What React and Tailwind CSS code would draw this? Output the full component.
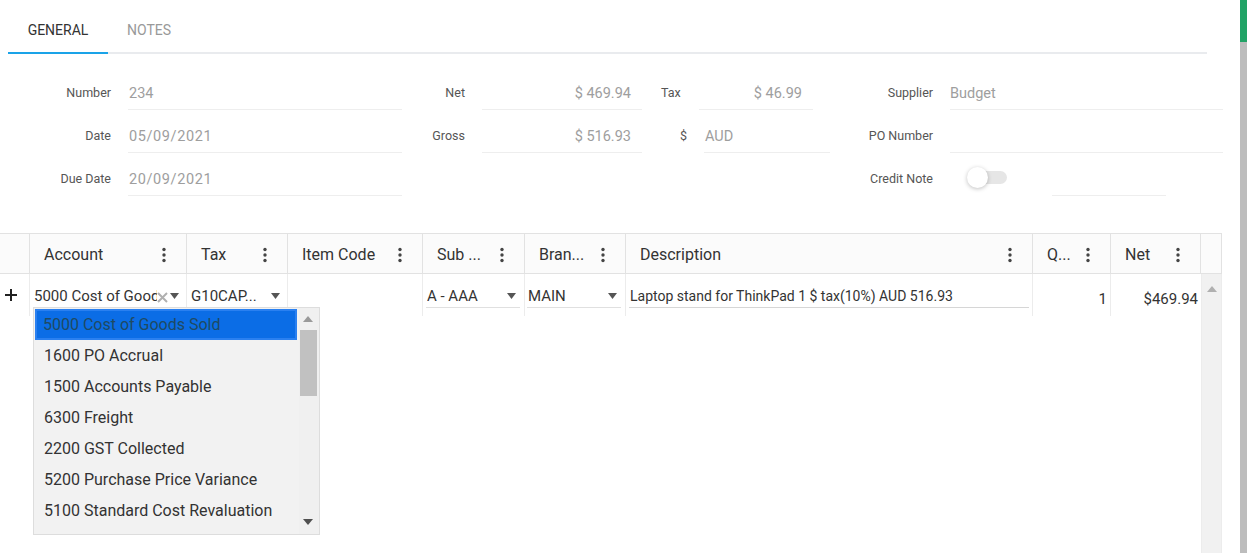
import React from 'react';

const labelCls = 'flex h-full items-end justify-end pb-[7px] text-[12.5px] text-[#555]';
const fieldCls = 'flex h-full items-end pb-[4px] border-b border-[#eeeeee] text-[14.5px] text-[#9e9e9e]';

const Kebab = () => (
  <svg width="4" height="16" viewBox="0 0 4 16" className="shrink-0">
    <circle cx="2" cy="2.5" r="1.7" fill="#444" />
    <circle cx="2" cy="8" r="1.7" fill="#444" />
    <circle cx="2" cy="13.5" r="1.7" fill="#444" />
  </svg>
);

const Caret = ({ color = '#555' }) => (
  <svg width="9" height="6" viewBox="0 0 9 6" className="shrink-0">
    <path d="M0 0 L9 0 L4.5 6 Z" fill={color} />
  </svg>
);

const CaretUp = ({ color = '#aaa' }) => (
  <svg width="10" height="6" viewBox="0 0 10 6">
    <path d="M0 6 L10 6 L5 0 Z" fill={color} />
  </svg>
);

const columns = [
  { name: 'Account', w: 'w-[157px]' },
  { name: 'Tax', w: 'w-[101px]' },
  { name: 'Item Code', w: 'w-[135px]' },
  { name: 'Sub ...', w: 'w-[102px]' },
  { name: 'Bran...', w: 'w-[101px]' },
  { name: 'Description', w: 'w-[407px]' },
  { name: 'Q...', w: 'w-[78px]' },
  { name: 'Net', w: 'w-[90px]' },
];

const accounts = [
  '5000 Cost of Goods Sold',
  '1600 PO Accrual',
  '1500 Accounts Payable',
  '6300 Freight',
  '2200 GST Collected',
  '5200 Purchase Price Variance',
  '5100 Standard Cost Revaluation',
];

const SelectEditor = ({ value, className, clear }) => (
  <div className={`flex h-[34px] items-end border-b border-[#e0e0e0] pb-[1px] ${className}`}>
    <div className="flex h-[20px] min-w-0 flex-1 items-center overflow-hidden whitespace-nowrap text-[15px] text-[#333]">
      {value}
    </div>
    {clear && (
      <svg width="11" height="11" viewBox="0 0 11 11" className="mb-[3px] mr-[2px] shrink-0">
        <path d="M1 1 L10 10 M10 1 L1 10" stroke="#b0b0b0" strokeWidth="2" />
      </svg>
    )}
    <div className="mb-[7px] pr-[4px]">
      <Caret />
    </div>
  </div>
);

export default function App() {
  return (
    <div className="relative h-[553px] w-[1247px] overflow-hidden bg-white font-['Roboto',sans-serif]">
      {/* tabs */}
      <div className="ml-[8px] flex w-[1199px] border-b-2 border-[#e9ebee]">
        <div className="-mb-[2px] flex h-[54px] w-[100px] items-center justify-center border-b-2 border-[#1aa3e8] pt-[8px] text-[14px] text-[#333]">
          GENERAL
        </div>
        <div className="flex h-[52px] w-[82px] items-center justify-center pt-[8px] text-[14px] text-[#999]">
          NOTES
        </div>
      </div>

      {/* form */}
      <div className="mt-[13px] flex flex-col">
        <div className="flex h-[43px]">
          <div className={`${labelCls} w-[111px]`}>Number</div>
          <div className={`${fieldCls} ml-[17px] w-[274px] pl-[1px]`}>234</div>
          <div className={`${labelCls} w-[63px]`}>Net</div>
          <div className={`${fieldCls} ml-[17px] w-[160px] justify-end pr-[11px]`}>$ 469.94</div>
          <div className={`${labelCls} ml-[19px] w-[38px] !justify-start`}>Tax</div>
          <div className={`${fieldCls} w-[114px] justify-end pr-[11px]`}>$ 46.99</div>
          <div className={`${labelCls} w-[120px]`}>Supplier</div>
          <div className={`${fieldCls} ml-[17px] w-[273px]`}>Budget</div>
        </div>
        <div className="flex h-[43px]">
          <div className={`${labelCls} w-[111px]`}>Date</div>
          <div className={`${fieldCls} ml-[17px] w-[274px] pl-[1px] tracking-[0.6px]`}>05/09/2021</div>
          <div className={`${labelCls} w-[63px]`}>Gross</div>
          <div className={`${fieldCls} ml-[17px] w-[160px] justify-end pr-[11px]`}>$ 516.93</div>
          <div className={`${labelCls} w-[45px]`}>$</div>
          <div className={`${fieldCls} ml-[17px] w-[126px] pl-[1px]`}>AUD</div>
          <div className={`${labelCls} w-[103px]`}>PO Number</div>
          <div className={`${fieldCls} ml-[17px] w-[273px]`}></div>
        </div>
        <div className="flex h-[43px]">
          <div className={`${labelCls} w-[111px]`}>Due Date</div>
          <div className={`${fieldCls} ml-[17px] w-[274px] pl-[1px] tracking-[0.6px]`}>20/09/2021</div>
          <div className={`${labelCls} w-[531px]`}>Credit Note</div>
          <div className="ml-[34px] flex h-full items-end pb-[8px]">
            <div className="relative flex h-[21px] w-[40px] items-center">
              <div className="ml-[17px] h-[13px] w-[23px] rounded-r-full bg-[#e6e6e6]"></div>
              <div className="absolute left-0 top-0 h-[21px] w-[21px] rounded-full bg-white shadow-[0_1px_4px_rgba(0,0,0,0.25)]"></div>
            </div>
          </div>
          <div className="ml-[45px] h-full w-[114px] border-b border-[#eeeeee]"></div>
        </div>
      </div>

      {/* grid */}
      <div className="mt-[37px] w-[1222px]">
        <div className="flex h-[41px] border-y border-[#e2e2e2] bg-[#fbfbfb]">
          <div className="w-[30px] shrink-0 border-r border-[#e2e2e2]"></div>
          {columns.map((c) => (
            <div
              key={c.name}
              className={`${c.w} flex shrink-0 items-center justify-between border-r border-[#e2e2e2] pl-[14px] pr-[20px] pt-[2px] text-[16px] text-[#333]`}
            >
              <span className="whitespace-nowrap">{c.name}</span>
              <Kebab />
            </div>
          ))}
          <div className="w-[21px] shrink-0 border-r border-[#e2e2e2]"></div>
        </div>

        <div className="flex h-[279px]">
          <div className="w-[1201px]">
            <div className="flex h-[42px]">
              <div className="flex w-[30px] shrink-0 items-start justify-center border-r border-[#ececec] pt-[15px] pr-[8px]">
                <svg width="12" height="12" viewBox="0 0 12 12">
                  <path d="M6 0 V12 M0 6 H12" stroke="#222" strokeWidth="2" />
                </svg>
              </div>
              <div className="w-[157px] shrink-0 border-r border-[#ececec]">
                <SelectEditor value="5000 Cost of Goods Sold" className="ml-[3px] mr-[3px] pl-[1px]" clear />
              </div>
              <div className="w-[101px] shrink-0 border-r border-[#ececec]">
                <SelectEditor value="G10CAP..." className="mx-[3px] pl-[1px]" />
              </div>
              <div className="w-[135px] shrink-0 border-r border-[#ececec]"></div>
              <div className="w-[102px] shrink-0 border-r border-[#ececec]">
                <SelectEditor value="A - AAA" className="ml-[3px] mr-[4px] pl-[1px]" />
              </div>
              <div className="w-[101px] shrink-0 border-r border-[#ececec]">
                <SelectEditor value="MAIN" className="ml-[2px] mr-[4px] pl-[1px]" />
              </div>
              <div className="w-[407px] shrink-0 border-r border-[#ececec]">
                <div className="mx-[3px] flex h-[34px] items-end border-b border-[#d6d6d6] pb-[1px] pl-[1px]">
                  <div className="flex h-[20px] items-center whitespace-nowrap text-[14px] text-[#333]">
                    Laptop stand for ThinkPad 1 $ tax(10%) AUD 516.93
                  </div>
                </div>
              </div>
              <div className="flex w-[78px] shrink-0 items-start justify-end border-r border-[#ececec] pr-[3px] pt-[14px] text-[15px] text-[#333]">
                1
              </div>
              <div className="flex w-[90px] shrink-0 items-start justify-end pr-[3px] pt-[14px] text-[15px] text-[#333]">
                $469.94
              </div>
            </div>
          </div>
          <div className="flex w-[21px] shrink-0 justify-center border-x border-[#ececec] bg-[#f1f1f1] pt-[12px]">
            <CaretUp color="#b0b0b0" />
          </div>
        </div>
      </div>

      {/* account dropdown */}
      <div className="absolute left-[33px] top-[307px] flex h-[228px] w-[287px] border border-[#dddddd] bg-[#f2f2f2]">
        <div className="flex w-[265px] flex-col pl-[1px] pt-[1px]">
          {accounts.map((a, i) => (
            <div
              key={a}
              className={
                i === 0
                  ? 'flex h-[31px] w-[262px] items-center whitespace-nowrap border-2 border-[#2a80f0] bg-[#0b6de6] pl-[6px] text-[16px] text-[#1f4a63]'
                  : 'flex h-[31px] items-center whitespace-nowrap pl-[9px] text-[16px] text-[#333]'
              }
            >
              {a}
            </div>
          ))}
        </div>
        <div className="flex w-[20px] flex-col items-center bg-[#f0f0f0]">
          <div className="flex h-[22px] items-center pr-[2px]">
            <CaretUp color="#9a9a9a" />
          </div>
          <div className="h-[66px] w-[17px] -translate-x-[1px] bg-[#c1c1c1]"></div>
          <div className="flex-1"></div>
          <div className="mb-[9px] pr-[2px]">
            <svg width="10" height="6" viewBox="0 0 10 6">
              <path d="M0 0 L10 0 L5 6 Z" fill="#505050" />
            </svg>
          </div>
        </div>
      </div>

      {/* page scrollbar */}
      <div className="absolute right-0 top-0 flex h-full w-[7px] flex-col bg-[#bdbdbd]">
        <div className="h-[42px] bg-[#21a366]"></div>
      </div>
    </div>
  );
}
